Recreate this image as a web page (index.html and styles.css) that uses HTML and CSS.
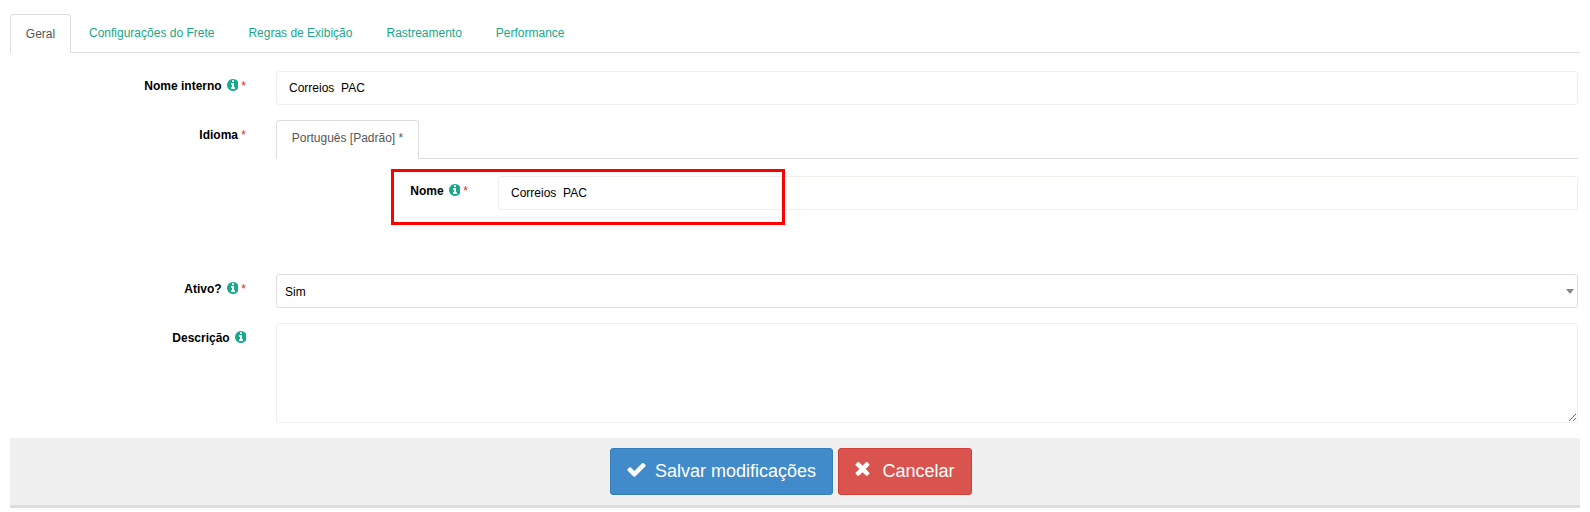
FILE: index.html
```html
<!DOCTYPE html>
<html lang="pt-BR">
<head>
    <meta charset="UTF-8">
    <meta name="viewport" content="width=device-width, initial-scale=1.0">
    <title>Editar transportadora</title>
    <link rel="stylesheet" href="styles.css">
</head>
<body>

<svg class="icon-defs" width="0" height="0" aria-hidden="true">
    <symbol id="i-info" viewBox="0 0 1536 1536">
        <path transform="translate(0 -128)" d="M1152 1376v-160q0-14-9-23t-23-9h-96v-512q0-14-9-23t-23-9h-320q-14 0-23 9t-9 23v160q0 14 9 23t23 9h96v320h-96q-14 0-23 9t-9 23v160q0 14 9 23t23 9h448q14 0 23-9t9-23zm-128-896v-160q0-14-9-23t-23-9h-192q-14 0-23 9t-9 23v160q0 14 9 23t23 9h192q14 0 23-9t9-23zm640 416q0 209-103 385.5t-279.5 279.5-385.5 103-385.5-103-279.5-279.5-103-385.5 103-385.5 279.5-279.5 385.5-103 385.5 103 279.5 279.5 103 385.5z"/>
    </symbol>
</svg>

<div class="page">
    <ul class="tabs">
        <li class="tab active">Geral</li>
        <li class="tab">Configurações do Frete</li>
        <li class="tab">Regras de Exibição</li>
        <li class="tab">Rastreamento</li>
        <li class="tab">Performance</li>
    </ul>

    <form class="form">
        <div class="row row-nome">
            <label class="label">Nome interno <svg class="info"><use href="#i-info"/></svg> <span class="req">*</span></label>
            <input class="input" type="text" value="Correios  PAC">
        </div>

        <div class="row row-idioma">
            <label class="label">Idioma <span class="req">*</span></label>
            <div class="lang">
                <ul class="lang-tabs">
                    <li class="lang-tab">Português [Padrão] *</li>
                </ul>
                <div class="row-inner">
                    <label class="label">Nome <svg class="info"><use href="#i-info"/></svg> <span class="req">*</span></label>
                    <input class="input" type="text" value="Correios  PAC">
                </div>
                <div class="highlight"></div>
            </div>
        </div>

        <div class="row row-ativo">
            <label class="label">Ativo? <svg class="info"><use href="#i-info"/></svg> <span class="req">*</span></label>
            <div class="select-wrap">
                <select class="select">
                    <option>Sim</option>
                    <option>Não</option>
                </select>
            </div>
        </div>

        <div class="row row-desc">
            <label class="label">Descrição <svg class="info"><use href="#i-info"/></svg></label>
            <textarea class="textarea"></textarea>
        </div>
    </form>

    <div class="actions">
        <button class="btn btn-save" type="button">
            <svg class="btn-icon" viewBox="0 0 1792 1792"><path d="M1671 566q0 40-28 68l-724 724-136 136q-28 28-68 28t-68-28l-136-136-362-362q-28-28-28-68t28-68l136-136q28-28 68-28t68 28l294 295 656-657q28-28 68-28t68 28l136 136q28 28 28 68z"/></svg>
            Salvar modificações
        </button>
        <button class="btn btn-cancel" type="button">
            <svg class="btn-icon" viewBox="0 0 1408 1792"><path d="M1298 1214q0 40-28 68l-136 136q-28 28-68 28t-68-28l-294-294-294 294q-28 28-68 28t-68-28l-136-136q-28-28-28-68t28-68l294-294-294-294q-28-28-28-68t28-68l136-136q28-28 68-28t68 28l294 294 294-294q28-28 68-28t68 28l136 136q28 28 28 68t-28 68l-294 294 294 294q28 28 28 68z"/></svg>
            Cancelar
        </button>
    </div>
</div>

</body>
</html>
```

FILE: styles.css
```css
body {
    font-family: "Liberation Sans", Arial, sans-serif;
    font-size: 12px;
    margin: 0;
    padding: 0;
    background: #fff;
    color: #000;
}
.icon-defs {
    display: block;
    height: 0;
}
.page {
    padding: 14px 10px 0;
}
.tabs {
    display: flex;
    list-style: none;
    margin: 0;
    padding: 0;
    height: 38px;
    border-bottom: 1px solid #ddd;
}
.tab {
    padding: 12px 18px 0 18px;
    color: #18a689;
    margin-right: -2px;
}
.tab.active {
    width: 61px;
    box-sizing: border-box;
    height: 39px;
    padding: 12px 0 0;
    text-align: center;
    color: #555;
    background: #fff;
    border: 1px solid #ddd;
    border-bottom: none;
    border-radius: 4px 4px 0 0;
    margin-right: 0;
}
.form {
    padding-top: 18px;
}
.row {
    display: grid;
    grid-template-columns: 266px 1fr;
    margin-right: 2px;
}
.label {
    font-weight: bold;
    text-align: right;
    padding: 8px 30px 0 0;
    line-height: 14px;
}
.info {
    width: 12px;
    height: 12px;
    fill: #18a98d;
    vertical-align: -1px;
    margin-left: 1px;
}
.req {
    color: #ed1c24;
    font-weight: normal;
}
.input,
.select,
.textarea {
    display: block;
    width: 100%;
    box-sizing: border-box;
    font-family: inherit;
    font-size: 12px;
    color: #000;
    background: #fff;
    border: 1px solid #efeee9;
    border-radius: 3px;
    outline: none;
}
.input {
    height: 34px;
    padding: 0 12px;
}
.row-idioma {
    margin-top: 15px;
}
.lang {
    position: relative;
}
.lang-tabs {
    list-style: none;
    margin: 0;
    padding: 0;
    height: 38px;
    border-bottom: 1px solid #ddd;
}
.lang-tab {
    width: 143px;
    height: 39px;
    box-sizing: border-box;
    padding: 10px 0 0;
    text-align: center;
    color: #555;
    background: #fff;
    border: 1px solid #ddd;
    border-bottom: none;
    border-radius: 4px 4px 0 0;
}
.row-inner {
    display: grid;
    grid-template-columns: 222px 1fr;
    margin-top: 17px;
}
.row-inner .label {
    padding-right: 30px;
}
.highlight {
    position: absolute;
    left: 115px;
    top: 49px;
    width: 394px;
    height: 56px;
    border: 3px solid #f00;
    box-sizing: border-box;
    pointer-events: none;
}
.row-ativo {
    margin-top: 64px;
}
.select-wrap {
    position: relative;
}
.select-wrap::after {
    content: "";
    position: absolute;
    right: 4px;
    top: 15px;
    border-left: 4px solid transparent;
    border-right: 4px solid transparent;
    border-top: 5px solid #888;
}
.select {
    height: 34px;
    padding: 2px 8px 0;
    appearance: none;
    border-color: #ddd;
}
.row-desc {
    margin-top: 15px;
}
.textarea {
    height: 100px;
    padding: 6px 12px;
    resize: vertical;
}
.actions {
    display: flex;
    justify-content: center;
    gap: 5px;
    margin-top: 15px;
    height: 70px;
    box-sizing: border-box;
    padding: 10px 9px 0 0;
    background: #f0f0f0;
    border-bottom: 3px solid #ddd;
}
.btn {
    display: flex;
    align-items: center;
    gap: 8px;
    height: 47px;
    box-sizing: border-box;
    font-family: inherit;
    font-size: 18px;
    color: #fff;
    border: 1px solid transparent;
    border-radius: 3px;
    padding: 0;
    cursor: pointer;
    justify-content: center;
}
.btn-save {
    width: 223px;
    background: #428bca;
    border-color: #357ebd;
}
.btn-cancel {
    width: 134px;
    background: #d9534f;
    border-color: #d43f3a;
    gap: 11px;
}
.btn-icon {
    width: 21px;
    height: 21px;
    fill: #fff;
    margin-top: -4px;
}
.btn-cancel .btn-icon {
    width: 17px;
}
```
